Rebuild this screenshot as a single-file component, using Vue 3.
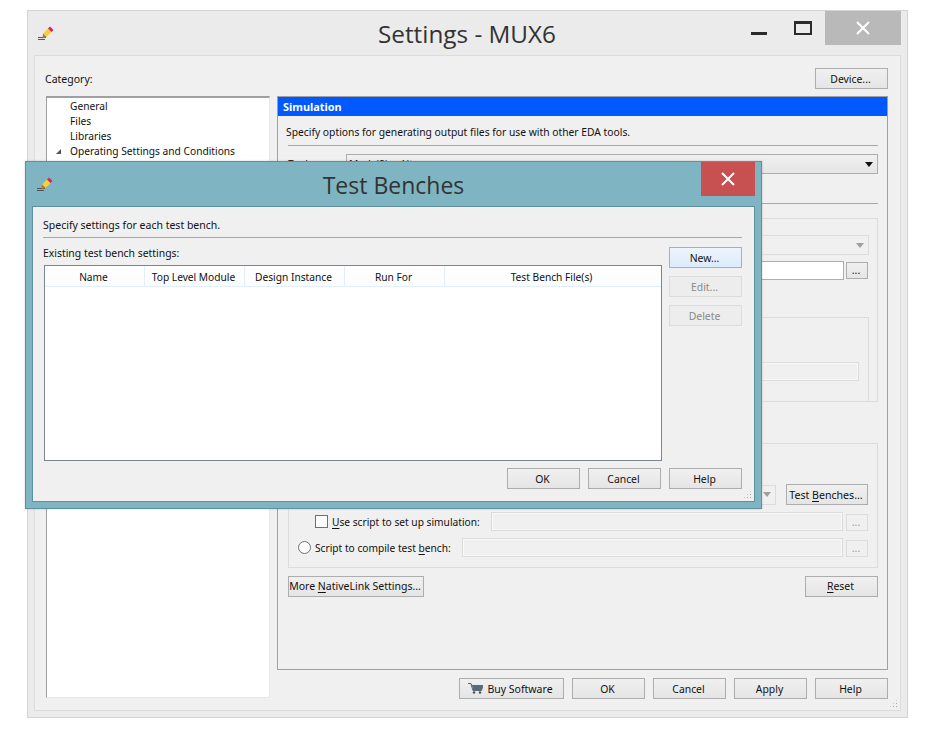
<script setup>
const treeItems = [
  { label: 'General' },
  { label: 'Files' },
  { label: 'Libraries' },
  { label: 'Operating Settings and Conditions', open: true },
]
const columns = [
  { name: 'Name', width: 100 },
  { name: 'Top Level Module', width: 100 },
  { name: 'Design Instance', width: 100 },
  { name: 'Run For', width: 100 },
  { name: 'Test Bench File(s)', width: 216 },
]
const footerButtons = ['OK', 'Cancel', 'Apply', 'Help']
</script>

<template>
  <div class="page">
    <!-- main window -->
    <div class="window main-win">
      <div class="titlebar main-title">
        <svg class="pencil" width="18" height="16" viewBox="0 0 18 16">
          <path d="M1 11.5h8M1 13.5h7" stroke="#555" stroke-width="1" />
          <path d="M6 7.500L11 2.500l3.500 3.500-5 5z" fill="#f6cf3f" />
          <path d="M6 7.500l3.500 3.500-4 1.500z" fill="#a8764a" />
          <path d="M11 2.500L13 .5l3.500 3.500-2 2z" fill="#cf2a5a" />
        </svg>
        <span class="title-text">Settings - MUX6</span>
        <div class="win-btns">
          <span class="min"></span>
          <span class="max"></span>
          <span class="close grey">
            <svg width="14" height="14" viewBox="0 0 14 14"><path d="M1 1l12 12M13 1L1 13" stroke="#fff" stroke-width="2" /></svg>
          </span>
        </div>
      </div>
      <div class="client">
        <div class="top-row">
          <span>Category:</span>
          <button class="btn device">Device...</button>
        </div>
        <div class="columns">
          <div class="tree">
            <div v-for="item in treeItems" :key="item.label" class="tree-item">
              <i v-if="item.open" class="tree-arrow"></i>{{ item.label }}
            </div>
          </div>
          <div class="right-col">
            <div class="panel">
              <div class="panel-head">Simulation</div>
              <div class="panel-body">
                <p class="desc">Specify options for generating output files for use with other EDA tools.</p>
                <div class="rule"></div>
                <div class="tool-row">
                  <span class="tool-label">Tool name:</span>
                  <div class="select"><span>ModelSim-Altera</span><i class="arrow"></i></div>
                </div>
                <div class="rule second"></div>
                <div class="group first-group">
                  <div class="row-one">
                    <div class="dis-select"><i class="arrow dim"></i></div>
                  </div>
                  <div class="row-two">
                    <div class="path-input"></div>
                    <button class="btn dots">...</button>
                  </div>
                  <div class="inner-group">
                    <div class="dis-input"></div>
                  </div>
                </div>
                <div class="group second-group">
                  <div class="bench-row">
                    <div class="dis-select small"><i class="arrow dim"></i></div>
                    <button class="btn bench"><span>Test <u>B</u>enches...</span></button>
                  </div>
                  <div class="script-row use-script">
                    <span class="check"></span>
                    <span class="lbl"><u>U</u>se script to set up simulation:</span>
                    <div class="dis-input grow"></div>
                    <button class="btn dots off">...</button>
                  </div>
                  <div class="script-row">
                    <span class="radio"></span>
                    <span class="lbl">Script to compile test <u>b</u>ench:</span>
                    <div class="dis-input grow"></div>
                    <button class="btn dots off">...</button>
                  </div>
                </div>
                <div class="panel-foot">
                  <button class="btn more">More <u>N</u>ativeLink Settings...</button>
                  <button class="btn std"><span><u>R</u>eset</span></button>
                </div>
              </div>
            </div>
            <div class="footer">
              <button class="btn buy">
                <svg width="15" height="11" viewBox="0 0 15 11">
                  <path d="M0 .5h3l1 2h11l-1.500 5H5L3 1.500" fill="none" stroke="#5a6b78" />
                  <path d="M4 2.500h11l-1.500 5H5z" fill="#5a6b78" />
                  <circle cx="6" cy="9.500" r="1.200" fill="#44525c" />
                  <circle cx="12" cy="9.500" r="1.200" fill="#44525c" />
                </svg>
                Buy Software
              </button>
              <button v-for="b in footerButtons" :key="b" class="btn std">{{ b }}</button>
            </div>
          </div>
        </div>
        <span class="grip main-grip"></span>
      </div>
    </div>

    <!-- test benches dialog -->
    <div class="window dialog">
      <div class="titlebar dlg-title">
        <svg class="pencil" width="18" height="16" viewBox="0 0 18 16">
          <path d="M1 11.500h8M1 13.500h7" stroke="#555" stroke-width="1" />
          <path d="M6 7.500L11 2.500l3.500 3.500-5 5z" fill="#f6cf3f" />
          <path d="M6 7.500l3.500 3.500-4 1.500z" fill="#a8764a" />
          <path d="M11 2.500L13 .5l3.500 3.500-2 2z" fill="#cf2a5a" />
        </svg>
        <span class="title-text">Test Benches</span>
        <span class="close red">
          <svg width="14" height="14" viewBox="0 0 14 14"><path d="M1 1l12 12M13 1L1 13" stroke="#fff" stroke-width="2" /></svg>
        </span>
      </div>
      <div class="dlg-client">
        <p class="desc">Specify settings for each test bench.</p>
        <div class="rule"></div>
        <div class="dlg-main">
          <div class="dlg-left">
            <div class="dlg-label">Existing test bench settings:</div>
            <div class="table">
              <div class="thead">
                <div v-for="c in columns" :key="c.name" class="th" :style="{ width: c.width + 'px' }">{{ c.name }}</div>
              </div>
            </div>
          </div>
          <div class="dlg-side">
            <button class="btn std active">New...</button>
            <button class="btn std off">Edit...</button>
            <button class="btn std off">Delete</button>
          </div>
        </div>
        <div class="dlg-foot">
          <button class="btn std">OK</button>
          <button class="btn std">Cancel</button>
          <button class="btn std">Help</button>
        </div>
        <span class="grip dlg-grip"></span>
      </div>
    </div>
  </div>
</template>

<style scoped>
.page {
  position: relative;
  width: 931px;
  height: 741px;
  background: #fff;
  overflow: hidden;
  font-family: "Noto Sans", sans-serif;
  font-size: 10.2px;
  color: #111;
}
p { margin: 0; }
u { text-decoration-thickness: 1px; text-underline-offset: 2px; }

.window { position: absolute; box-sizing: border-box; }
.main-win {
  left: 27px; top: 10px; width: 881px; height: 708px;
  background: #ebebeb;
  border: 1px solid #d4d4d4;
  display: flex;
  flex-direction: column;
}
.titlebar {
  position: relative;
  display: flex;
  align-items: center;
  justify-content: center;
  flex: none;
}
.main-title { height: 44px; }
.pencil { position: absolute; left: 9px; top: 15px; }
.dlg-title .pencil { left: 10px; top: 15px; }
.title-text { font-family: "Open Sans", sans-serif; font-size: 24.3px; color: #333; }
.main-title .title-text { margin-left: -1px; }
.win-btns {
  position: absolute; right: 6px; top: 0;
  display: flex; align-items: flex-start;
}
.min { width: 16px; height: 3px; background: #2b2b2b; margin: 21px 27px 0 0; }
.max { width: 18px; height: 14px; box-sizing: border-box; border: 2px solid #2b2b2b; border-top-width: 3px; margin: 10px 13px 0 0; }
.close { display: flex; align-items: center; justify-content: center; }
.close.grey { width: 76px; height: 34px; background: #b9b9b9; }
.close.red { position: absolute; right: 6px; top: 0; width: 54px; height: 34px; background: #c75050; }

.client {
  position: relative;
  flex: 1;
  margin: 0 6px 6px;
  background: #f0f0f0;
  border: 1px solid #dcdcdc;
  box-sizing: border-box;
  padding: 12px 12px 0 10px;
}
.top-row { display: flex; justify-content: space-between; align-items: center; height: 21px; margin-bottom: 7px; font-size: 10.5px; }
.btn {
  box-sizing: border-box;
  height: 21px;
  padding: 0 2px 0 0;
  border: 1px solid #adadad;
  background: linear-gradient(#f0f0f0, #e5e5e5);
  font: inherit;
  font-size: 10.4px;
  color: #111;
  text-align: center;
}
.device { width: 73px; }
.std { width: 73px; }
.columns { display: flex; gap: 7px; margin-left: 1px; }
.tree {
  box-sizing: border-box;
  width: 224px;
  height: 602px;
  background: #fff;
  border: 1px solid #a0a0a0;
  border-width: 2px 1px 1px 1px;
  border-bottom-color: #e8e8e8;
  border-right-color: #e8e8e8;
  padding-left: 23px;
  padding-top: 1px;
}
.tree-item { position: relative; height: 15px; line-height: 15px; white-space: nowrap; }
.tree-arrow {
  position: absolute; left: -14px; top: 5px;
  border-style: solid; border-width: 0 0 5px 5px;
  border-color: transparent transparent #555 transparent;
}
.right-col { width: 611px; }
.panel {
  box-sizing: border-box;
  height: 574px;
  border: 1px solid #a0a0a0;
  border-top-width: 1px;
  background: #f0f0f0;
}
.panel-head {
  height: 19px; line-height: 20px;
  background: #0058ff;
  color: #fff;
  font-weight: 700;
  font-size: 10.9px;
  padding-left: 5px;
}
.panel-body { padding: 0 9px 0 10px; }
.desc { line-height: 15px; }
.panel-body > .desc { padding-top: 9px; margin-bottom: 5px; margin-left: -2px; font-size: 10.3px; }
.rule { height: 1px; background: #a8a8a8; }
.tool-row { display: flex; align-items: center; margin-top: 8px; height: 20px; }
.tool-label { width: 58px; }
.select {
  flex: 1; box-sizing: border-box; height: 20px;
  border: 1px solid #adadad;
  background: linear-gradient(#f0f0f0, #e5e5e5);
  display: flex; align-items: center; justify-content: space-between;
  padding: 0 4px 0 2px;
}
.arrow {
  border-style: solid; border-width: 5px 4px 0 4px;
  border-color: #111 transparent transparent transparent;
}
.arrow.dim { border-top-color: #a0a0a0; }
.rule.second { margin-top: 29px; }
.group { box-sizing: border-box; border: 1px solid #dcdcdc; }
.first-group { margin-top: 14px; height: 184px; padding: 16px 8px 0 29px; }
.row-one, .row-two { display: flex; justify-content: flex-end; }
.dis-select {
  box-sizing: border-box;
  width: 520px; height: 20px;
  border: 1px solid #dcdcdc;
  display: flex; align-items: center; justify-content: flex-end; padding-right: 4px;
}
.dis-select.small { width: 30px; margin-right: 10px; }
.row-two { margin-top: 6px; gap: 2px; padding-right: 1px; }
.path-input { width: 520px; height: 19px; box-sizing: border-box; background: #fff; border: 1px solid #adadad; }
.dots { width: 22px; height: 17px; line-height: 11px; margin-top: 1px; }
.dots.off { color: #999; border-color: #dcdcdc; background: #f0f0f0; }
.inner-group { margin-top: 37px; margin-left: -1px; height: 85px; box-sizing: border-box; border: 1px solid #dcdcdc; padding: 44px 9px 0 10px; }
.dis-input { height: 19px; box-sizing: border-box; border: 1px solid #dcdcdc; box-shadow: inset 0 0 0 1px #f8f8f8; }
.grow { flex: 1; }
.second-group { margin-top: 41px; height: 125px; padding: 0 9px 0 9px; }
.bench-row { display: flex; justify-content: flex-end; align-items: center; margin-top: 40px; height: 21px; }
.bench { width: 82px; font-size: 10.6px; }
.script-row { display: flex; align-items: center; gap: 3px; height: 19px; }
.use-script { margin-top: 7px; padding-left: 17px; }
.script-row + .script-row { margin-top: 7px; }
.script-row .lbl { white-space: nowrap; margin-left: 1px; margin-right: 8px; }
.check { width: 13px; height: 13px; box-sizing: border-box; border: 1px solid #707070; background: #fff; }
.radio { width: 13px; height: 13px; box-sizing: border-box; border: 1px solid #707070; border-radius: 50%; background: #fff; }
.panel-foot { display: flex; justify-content: space-between; margin-top: 8px; }
.panel-foot .btn { padding-bottom: 1px; }
.more { width: 136px; font-size: 10.5px; }
.footer { display: flex; justify-content: flex-end; gap: 8px; margin-top: 8px; }
.buy { width: 105px; display: flex; align-items: center; justify-content: center; gap: 4px; font-size: 10.5px; }

.grip {
  position: absolute; width: 9px; height: 9px;
  background-image: radial-gradient(circle, #a8a8a8 1px, transparent 1px);
  background-size: 3px 3px;
  clip-path: polygon(100% 0, 100% 100%, 0 100%);
}
.main-grip { right: 2px; bottom: 2px; }
.dlg-grip { right: 2px; bottom: 2px; }

.dialog {
  left: 25px; top: 161px; width: 737px; height: 348px;
  background: #7fb5c2;
  border: 1px solid #5f909b;
  box-shadow: 0 0 2px rgba(0,0,0,.2);
  display: flex; flex-direction: column;
}
.dlg-title { height: 44px; }
.dlg-title .title-text { margin-top: 2px; font-size: 23px; }
.dlg-client {
  position: relative;
  flex: 1;
  margin: 0 6px 6px;
  box-sizing: border-box;
  background: #f0f0f0;
  border: 1px solid #5f909b;
  padding: 11px 12px 0 10px;
}
.dlg-client > .desc { margin-bottom: 4px; font-size: 10.5px; }
.dlg-main { display: flex; gap: 7px; }
.dlg-left { flex: 1; }
.dlg-label { line-height: 15px; margin-top: 8px; margin-bottom: 4px; font-size: 10.4px; }
.table {
  margin-left: 1px;
  box-sizing: border-box;
  height: 196px;
  background: #fff;
  border: 1px solid #7a8791;
}
.thead { display: flex; height: 20px; background: linear-gradient(#fff, #fbfcfe); border-bottom: 1px solid #e3eefb; }
.th {
  box-sizing: border-box;
  text-align: center; line-height: 22px;
  padding-right: 2px;
  border-right: 1px solid #e3eefb;
  white-space: nowrap;
}
.th:last-child { border-right: 0; padding-right: 3px; }
.dlg-side { display: flex; flex-direction: column; gap: 8px; padding-top: 9px; }
.active { border-color: #8fb4dd; background: linear-gradient(#ecf4fc, #dcecfb); }
.std.off { color: #888; border-color: #dcdcdc; background: #ededed; }
.dlg-foot { display: flex; justify-content: flex-end; gap: 8px; margin-top: 7px; }
</style>
